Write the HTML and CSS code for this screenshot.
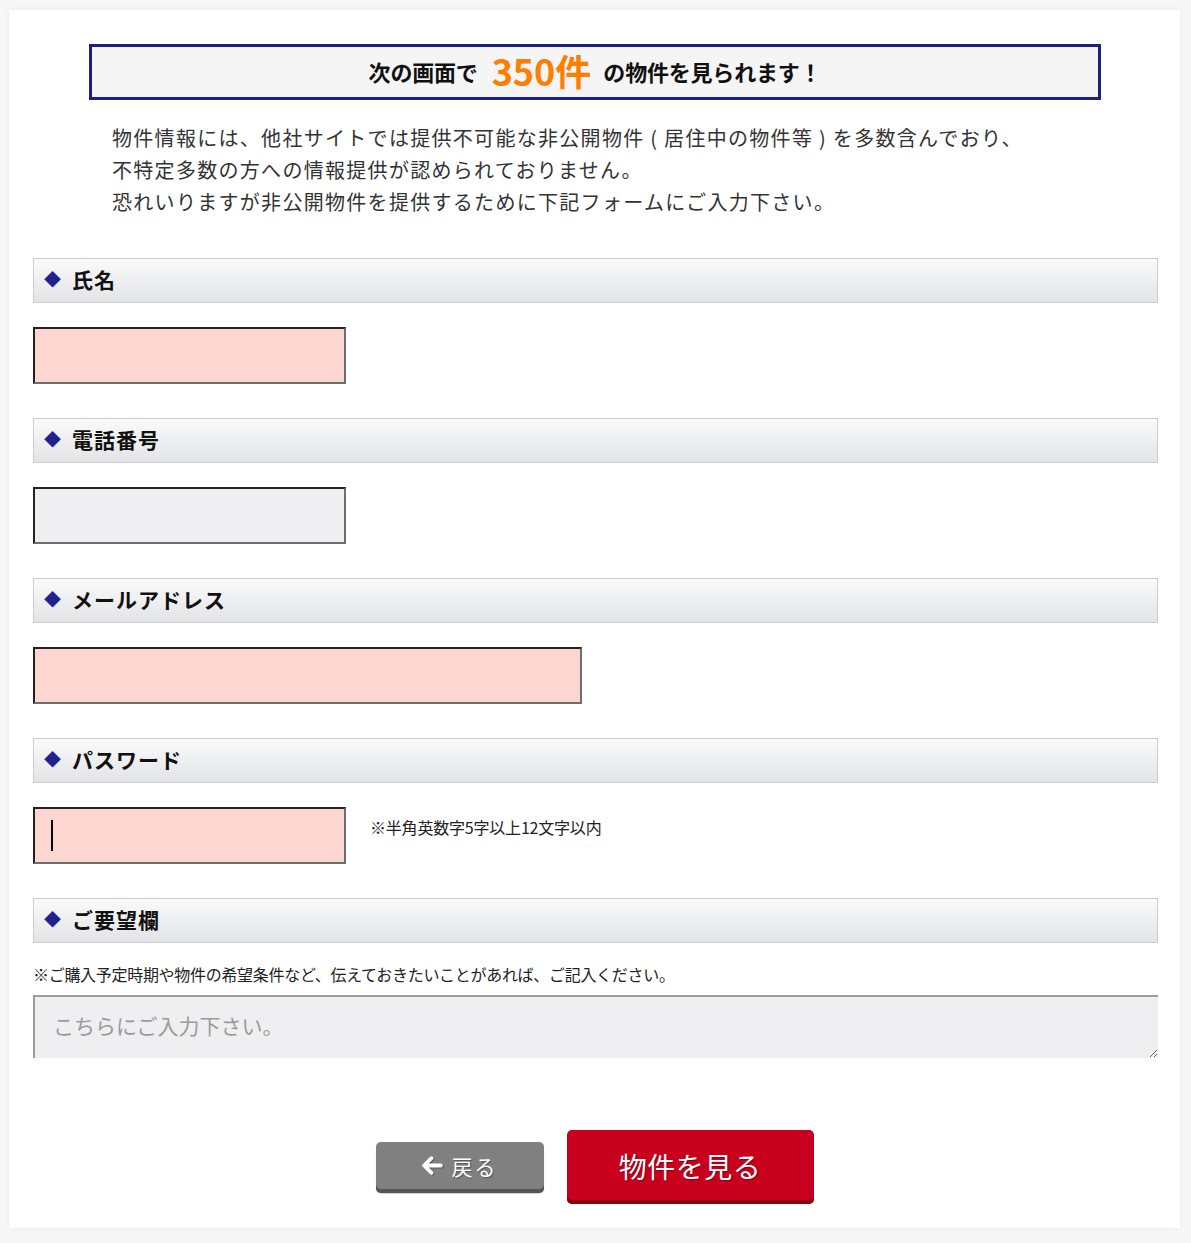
FILE: index.html
```html
<!DOCTYPE html>
<html lang="ja">
<head>
<meta charset="utf-8">
<title>物件を見る</title>
<link rel="stylesheet" href="styles.css">
</head>
<body>
<div class="card">
  <div class="banner">次の画面で <span class="count">350件</span> の物件を見られます！</div>
  <p class="intro">物件情報には、他社サイトでは提供不可能な非公開物件 ( 居住中の物件等 ) を多数含んでおり、<br>不特定多数の方への情報提供が認められておりません。<br>恐れいりますが非公開物件を提供するために下記フォームにご入力下さい。</p>

  <form class="form">
    <div class="field">
      <h2 class="label"><span class="dia">◆</span>氏名</h2>
      <div class="row"><input class="inp pink short" type="text"></div>
    </div>
    <div class="field">
      <h2 class="label"><span class="dia">◆</span>電話番号</h2>
      <div class="row"><input class="inp gray short" type="text"></div>
    </div>
    <div class="field">
      <h2 class="label"><span class="dia">◆</span>メールアドレス</h2>
      <div class="row"><input class="inp pink long" type="text"></div>
    </div>
    <div class="field">
      <h2 class="label"><span class="dia">◆</span>パスワード</h2>
      <div class="row">
        <div class="inp-wrap"><input class="inp pink short" type="password"><span class="caret"></span></div>
        <span class="hint">※半角英数字5字以上12文字以内</span>
      </div>
    </div>
    <div class="field last">
      <h2 class="label"><span class="dia">◆</span>ご要望欄</h2>
      <p class="note">※ご購入予定時期や物件の希望条件など、伝えておきたいことがあれば、ご記入ください。</p>
      <textarea class="ta" placeholder="こちらにご入力下さい。"></textarea>
    </div>
    <div class="buttons">
      <button type="button" class="btn back"><svg class="arrow" viewBox="0 0 20 18" width="21" height="19"><path d="M9 2 L2 9 L9 16 M2.5 9 H18" fill="none" stroke="#fff" stroke-width="3.6" stroke-linecap="round" stroke-linejoin="round"/></svg>戻る</button>
      <button type="button" class="btn submit">物件を見る</button>
    </div>
  </form>
</div>
</body>
</html>
```
FILE: styles.css
```css
* { box-sizing: border-box; }
html, body { margin: 0; padding: 0; }
body {
  background: #f7f7f7;
  font-family: "Noto Sans CJK JP", "Noto Sans", sans-serif;
  color: #333;
  width: 1191px;
  height: 1243px;
  overflow: hidden;
}
.card {
  width: 1171px;
  height: 1218px;
  margin: 10px 0 0 9px;
  background: #fff;
  box-shadow: 0 0 6px rgba(0,0,0,0.06);
  padding: 34px 22px 0 24px;
}
.banner {
  width: 1012px;
  height: 56px;
  margin: 0 0 0 56px;
  border: 3px solid #1d2080;
  background: #f5f5f5;
  display: flex;
  align-items: center;
  justify-content: center;
  font-size: 22px;
  font-weight: 700;
  color: #111;
  letter-spacing: -0.2px;
  padding-bottom: 3px;
}
.count {
  color: #ff7d00;
  font-size: 36px;
  font-weight: 700;
  margin: 0 12px 0 14px;
  letter-spacing: 0;
  position: relative;
  top: -1px;
}
.intro {
  margin: 22px 0 0 79px;
  font-size: 20px;
  line-height: 32px;
  color: #333;
  letter-spacing: 1.3px;
}
.form { margin-top: 40px; }
.field { margin-bottom: 34px; }
.field.last { margin-bottom: 0; }
.label {
  margin: 0;
  height: 45px;
  border: 1px solid #ccc;
  background: linear-gradient(#fafafa, #e3e4e7);
  display: flex;
  align-items: center;
  font-size: 21px;
  font-weight: 700;
  color: #111;
  padding-left: 10px;
  padding-bottom: 3px;
  letter-spacing: 1px;
}
.dia {
  color: #1d2490;
  font-size: 17px;
  margin-right: 10px;
  position: relative;
  top: -1px;
}
.row {
  margin-top: 24px;
  display: flex;
  align-items: center;
}
.inp-wrap { position: relative; }
.inp {
  display: block;
  height: 57px;
  border-style: solid;
  border-width: 2px;
  border-color: #222 #6e6e6e #6e6e6e #222;
  padding: 0 16px;
  font-size: 20px;
  outline: none;
}
.pink { background: #fcd6d0; }
.gray { background: #efeff1; }
.short { width: 313px; }
.long { width: 549px; }
.caret {
  position: absolute;
  left: 18px;
  top: 13px;
  width: 2px;
  height: 31px;
  background: #000;
}
.hint {
  margin-left: 24px;
  font-size: 16px;
  color: #222;
  position: relative;
  top: -9px;
  letter-spacing: -0.2px;
}
.note {
  margin: 20px 0 10px 0;
  font-size: 16px;
  line-height: 22px;
  color: #222;
  letter-spacing: -0.3px;
}
.ta {
  display: block;
  width: 1125px;
  height: 63px;
  border: 0;
  border-top: 2px solid #9d9d9d;
  border-left: 2px solid #9d9d9d;
  background: #efeff1;
  padding: 13px 18px;
  font-family: "Noto Sans CJK JP", sans-serif;
  font-size: 21px;
  color: #333;
  outline: none;
  resize: vertical;
}
.ta::placeholder { color: #9a9a9a; }
.buttons {
  display: flex;
  justify-content: center;
  align-items: center;
  gap: 23px;
  margin-top: 72px;
  padding-right: 2px;
}
.btn {
  border: 0;
  color: #fff;
  font-family: "Noto Sans CJK JP", sans-serif;
  cursor: pointer;
  display: flex;
  align-items: center;
  justify-content: center;
  text-shadow: 1px 1px 1px rgba(0,0,0,0.35);
}
.back {
  width: 168px;
  height: 51px;
  background: #808080;
  border-radius: 5px;
  box-shadow: inset 0 -4px 0 #555, 0 1px 1px rgba(0,0,0,0.2);
  font-size: 21px;
  padding-bottom: 4px;
  letter-spacing: 2px;
}
.arrow { margin-right: 9px; filter: drop-shadow(1px 1px 0 rgba(0,0,0,0.3)); }
.submit {
  width: 247px;
  height: 74px;
  background: #c8001e;
  border-radius: 5px;
  box-shadow: inset 0 -4px 0 #8c0010;
  font-size: 28px;
  letter-spacing: 0.5px;
  padding-bottom: 4px;
}
```
